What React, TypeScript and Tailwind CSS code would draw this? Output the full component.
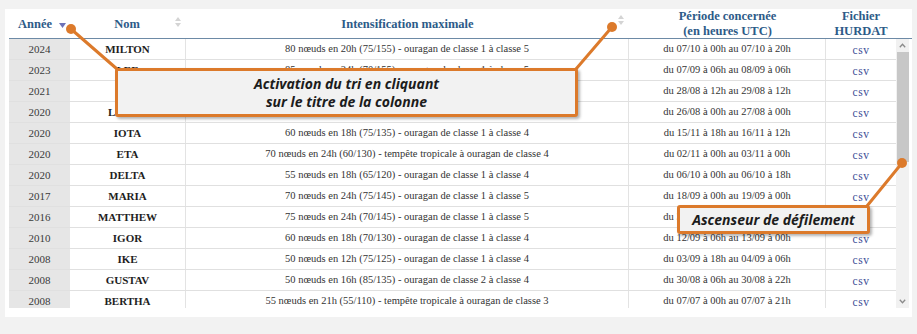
import React from 'react';

type Row = { year: string; name: string; intens: string; period: string };

const rows: Row[] = [
  { year: '2024', name: 'MILTON', intens: '80 nœuds en 20h (75/155) - ouragan de classe 1 à classe 5', period: 'du 07/10 à 00h au 07/10 à 20h' },
  { year: '2023', name: 'LEE', intens: '85 nœuds en 24h (70/155) - ouragan de classe 1 à classe 5', period: 'du 07/09 à 06h au 08/09 à 06h' },
  { year: '2021', name: 'IDA', intens: '45 nœuds en 24h (85/130) - ouragan de classe 1 à classe 4', period: 'du 28/08 à 12h au 29/08 à 12h' },
  { year: '2020', name: 'LAURA', intens: '45 nœuds en 24h (80/125) - ouragan de classe 1 à classe 4', period: 'du 26/08 à 00h au 27/08 à 00h' },
  { year: '2020', name: 'IOTA', intens: '60 nœuds en 18h (75/135) - ouragan de classe 1 à classe 4', period: 'du 15/11 à 18h au 16/11 à 12h' },
  { year: '2020', name: 'ETA', intens: '70 nœuds en 24h (60/130) - tempête tropicale à ouragan de classe 4', period: 'du 02/11 à 00h au 03/11 à 00h' },
  { year: '2020', name: 'DELTA', intens: '55 nœuds en 18h (65/120) - ouragan de classe 1 à classe 4', period: 'du 06/10 à 00h au 06/10 à 18h' },
  { year: '2017', name: 'MARIA', intens: '70 nœuds en 24h (75/145) - ouragan de classe 1 à classe 5', period: 'du 18/09 à 00h au 19/09 à 00h' },
  { year: '2016', name: 'MATTHEW', intens: '75 nœuds en 24h (70/145) - ouragan de classe 1 à classe 5', period: 'du 30/09 à 06h au 01/10 à 06h' },
  { year: '2010', name: 'IGOR', intens: '60 nœuds en 18h (70/130) - ouragan de classe 1 à classe 4', period: 'du 12/09 à 06h au 13/09 à 00h' },
  { year: '2008', name: 'IKE', intens: '50 nœuds en 12h (75/125) - ouragan de classe 1 à classe 4', period: 'du 03/09 à 18h au 04/09 à 06h' },
  { year: '2008', name: 'GUSTAV', intens: '50 nœuds en 16h (85/135) - ouragan de classe 2 à classe 4', period: 'du 30/08 à 06h au 30/08 à 22h' },
  { year: '2008', name: 'BERTHA', intens: '55 nœuds en 21h (55/110) - tempête tropicale à ouragan de classe 3', period: 'du 07/07 à 00h au 07/07 à 21h' },
];

const COLS = 'grid grid-cols-[61px_116px_443px_197px_70px]';

function SortIdle() {
  return (
    <svg width="6" height="10" viewBox="0 0 6 10" className="shrink-0">
      <path d="M3 0 L6 4 L0 4 Z" fill="#d4d4d4" />
      <path d="M3 10 L6 6 L0 6 Z" fill="#d4d4d4" />
    </svg>
  );
}

function SortDown() {
  return (
    <svg width="7" height="5" viewBox="0 0 7 5" className="shrink-0">
      <path d="M0 0 L7 0 L3.5 5 Z" fill="#6d72b8" />
    </svg>
  );
}

function Callout({ className, children }: { className: string; children: React.ReactNode }) {
  // Annotation boxes lie over the table, so they are placed by hand.
  return (
    <div
      className={`absolute flex flex-col items-center justify-center rounded-[3px] border-[3px] border-[#dc7a2b] bg-[#f2f2f2] text-center text-[14px] leading-[18px] font-bold italic text-[#1c1c1c] shadow-[2px_2px_3px_rgba(0,0,0,0.3)] [font-family:'Open_Sans',sans-serif] ${className}`}
    >
      {children}
    </div>
  );
}

export default function App() {
  return (
    <div className="h-[334px] w-[917px] bg-[#f2f2f2] px-[5px] pt-[9px] [font-family:'Liberation_Serif',serif]">
      <div className="relative h-[308px] w-[907px] bg-white pl-[4px]">
        {/* header */}
        <div className={`${COLS} h-[30px] border-b border-[#6d8aa6] text-[12.5px] leading-[15px] font-bold text-[#2d5b88]`}>
          <div className="flex items-center gap-[7px] pl-[9px]">
            <span>Année</span>
            <span className="mt-[3px]"><SortDown /></span>
          </div>
          <div className="relative flex items-center justify-center">
            <span className="pr-[2px]">Nom</span>
            <span className="absolute right-[5px] top-[8px]"><SortIdle /></span>
          </div>
          <div className="relative flex items-center justify-center">
            <span>Intensification maximale</span>
            <span className="absolute right-[5px] top-[6px]"><SortIdle /></span>
          </div>
          <div className="flex items-center justify-center text-center">
            <span>Période concernée<br />(en heures UTC)</span>
          </div>
          <div className="flex items-center justify-center text-center">
            <span>Fichier<br />HURDAT</span>
          </div>
        </div>

        {/* body + scrollbar */}
        <div className="flex h-[269px]">
          <div className="h-full w-[887px] overflow-hidden text-[11px] text-[#333]">
            {rows.map((r, i) => (
              <div key={i} className={`${COLS} h-[21px] border-b border-[#e0e0e0]`}>
                <div className="flex items-center justify-center bg-[#e6e6e6] text-[#3a3a3a]">{r.year}</div>
                <div className="flex items-center justify-center border-r border-[#e3e3e3] font-bold text-[#1e1e1e]">{r.name}</div>
                <div className="flex items-center justify-center border-r border-[#e3e3e3] text-[10.5px]">{r.intens}</div>
                <div className="flex items-center justify-center border-r border-[#e3e3e3] text-[10.5px]">{r.period}</div>
                <div className="flex items-center justify-center pt-[3px] text-[11.5px] tracking-[0.5px] text-[#3d4d96]">csv</div>
              </div>
            ))}
          </div>
          <div className="flex h-full w-[13px] flex-col items-center bg-[#f1f1f1]">
            <div className="flex h-[13px] w-full items-center justify-center">
              <svg width="7" height="5" viewBox="0 0 7 5"><path d="M0.8 4.2 L3.5 1.3 L6.2 4.2" fill="none" stroke="#8a8a8a" strokeWidth="1.3" /></svg>
            </div>
            <div className="h-[110px] w-[12px] bg-[#c7c7c7]" />
            <div className="flex-1" />
            <div className="flex h-[13px] w-full items-center justify-center">
              <svg width="7" height="5" viewBox="0 0 7 5"><path d="M0.8 0.8 L3.5 3.7 L6.2 0.8" fill="none" stroke="#8a8a8a" strokeWidth="1.3" /></svg>
            </div>
          </div>
        </div>

        {/* annotation leader lines */}
        <svg className="pointer-events-none absolute left-0 top-0" width="907" height="308">
          <g stroke="#dc7a2b" strokeWidth="3" strokeLinecap="round">
            <line x1="66" y1="20" x2="112" y2="60" />
            <line x1="607" y1="18" x2="571" y2="60" />
            <line x1="897" y1="154" x2="862" y2="197" />
          </g>
          <g fill="#dc7a2b">
            <circle cx="66" cy="20" r="5" />
            <circle cx="607" cy="18" r="5" />
            <circle cx="897" cy="154" r="5" />
          </g>
        </svg>

        <Callout className="left-[110px] top-[59px] h-[49px] w-[463px]">
          <span>Activation du tri en cliquant</span>
          <span>sur le titre de la colonne</span>
        </Callout>
        <Callout className="left-[672px] top-[196px] h-[29px] w-[193px]">
          <span>Ascenseur de défilement</span>
        </Callout>
      </div>
    </div>
  );
}
